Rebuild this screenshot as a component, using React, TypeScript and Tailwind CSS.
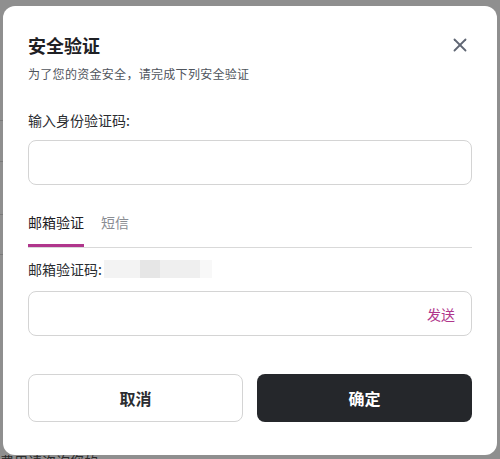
import React from "react";

const font = { fontFamily: '"Noto Sans CJK SC", "Noto Sans", sans-serif' };

export default function App() {
  return (
    <div
      className="relative w-[500px] h-[459px] overflow-hidden bg-[#8f8f8f]"
      style={font}
    >
      {/* dimmed page behind the overlay */}
      <div className="absolute inset-0">
        <div className="absolute left-0 top-[120px] w-[10px] h-px bg-[#7a7a7a]" />
        <div className="absolute left-0 top-[161px] w-[10px] h-px bg-[#7a7a7a]" />
        <div className="absolute left-0 top-[214px] w-[10px] h-px bg-[#7a7a7a]" />
        <div className="absolute left-0 top-[254px] w-[10px] h-px bg-[#7a7a7a]" />
        <div className="absolute left-0 top-[451px] text-[14px] leading-[20px] text-[#2a2a2a]">
          费用请咨询您的
        </div>
      </div>

      <div className="relative ml-[3px] mt-[6px] w-[494px] h-[449px] rounded-[12px] bg-white px-[25px] pt-[27px] pb-[33px]">
        <div className="flex items-center justify-between h-[24px]">
          <h2 className="text-[18px] leading-[24px] font-bold text-[#1e2024]">安全验证</h2>
          <button className="mr-[1px] text-[#5f6673]">
            <svg width="22" height="22" viewBox="0 0 24 24" fill="none" stroke="currentColor" strokeWidth="2" strokeLinecap="round">
              <path d="M18 6 6 18" />
              <path d="m6 6 12 12" />
            </svg>
          </button>
        </div>
        <p className="mt-[8px] text-[12px] leading-[18px] tracking-[0.3px] text-[#4f545c]">
          为了您的资金安全，请完成下列安全验证
        </p>

        <div className="mt-[27px] text-[14px] leading-[20px] text-[#2b2d31]">输入身份验证码:</div>
        <input className="mt-[10px] block w-full h-[45px] rounded-[8px] border border-[#d4d4d4] px-3 text-[14px] outline-none" />

        <div className="mt-[27px] flex items-end gap-[17px] border-b border-[#d9d9d9]">
          <div className="pb-[12px] border-b-[3px] border-[#b0368c] text-[14px] leading-[20px] text-[#1e2024]">
            邮箱验证
          </div>
          <div className="pb-[15px] text-[14px] leading-[20px] text-[#8a8d93]">短信</div>
        </div>

        <div className="mt-[11px] flex items-center text-[14px] leading-[20px] text-[#2b2d31]">
          <span>邮箱验证码:</span>
          <span className="ml-[2px] flex h-[20px] items-center">
            <span className="block h-[18px] w-[36px] bg-[#f3f3f3]" />
            <span className="block h-[18px] w-[20px] bg-[#e6e6e6]" />
            <span className="block h-[18px] w-[40px] bg-[#efefef]" />
            <span className="block h-[18px] w-[12px] bg-[#f8f8f8]" />
          </span>
        </div>

        <div className="mt-[12px] flex h-[45px] items-center rounded-[8px] border border-[#d4d4d4] pl-3 pr-[16px]">
          <input className="flex-1 h-full text-[14px] outline-none" />
          <span className="text-[14px] leading-[20px] text-[#b0368c]">发送</span>
        </div>

        <div className="mt-[38px] grid grid-cols-2 gap-[14px]">
          <button className="h-[48px] rounded-[8px] border border-[#d4d4d4] bg-white text-[16px] font-semibold text-[#2b2d31]">
            取消
          </button>
          <button className="h-[48px] rounded-[8px] bg-[#25272b] text-[16px] font-semibold text-white">
            确定
          </button>
        </div>
      </div>
    </div>
  );
}
